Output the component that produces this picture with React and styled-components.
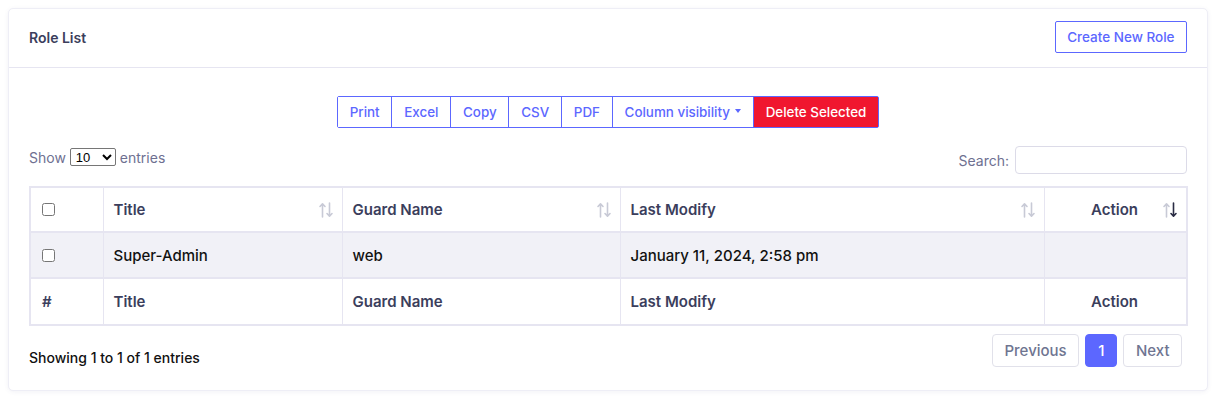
import React from "react";
import styled, { createGlobalStyle } from "styled-components";

const primary = "#5c67ff";
const heading = "#3b3e5c";
const line = "#e6e5f1";

const GlobalStyle = createGlobalStyle`
  html, body {
    margin: 0;
    padding: 0;
    background: #ffffff;
    font-family: Inter, "Liberation Sans", sans-serif;
  }
`;

const Page = styled.div`
  padding: 8px;
  width: 1200px;
`;

const Card = styled.div`
  background: #fff;
  border: 1px solid #eeeef6;
  border-radius: 5px;
  box-shadow: 0 1px 4px rgba(90, 90, 140, 0.08);
`;

const CardHeader = styled.div`
  display: flex;
  align-items: center;
  justify-content: space-between;
  height: 58px;
  padding: 0 20px;
  border-bottom: 1px solid ${line};
`;

const Title = styled.h5`
  margin: -2px 0 0;
  font-size: 14px;
  font-weight: 600;
  color: ${heading};
`;

const OutlineButton = styled.button`
  font-family: inherit;
  height: 32px;
  padding: 0 11.5px;
  font-size: 13.5px;
  font-weight: 500;
  color: ${primary};
  background: #fff;
  border: 1px solid ${primary};
  border-radius: 2px;
  margin-top: -2px;
`;

const CardBody = styled.div`
  padding: 28px 20px 23px;
`;

const Toolbar = styled.div`
  display: flex;
  justify-content: center;
`;

const Group = styled.div`
  display: flex;
  border: 1px solid ${primary};
  border-radius: 2px;
`;

const GroupButton = styled.button`
  font-family: inherit;
  display: flex;
  align-items: center;
  gap: 5px;
  height: 30px;
  padding: 0 11.8px;
  font-size: 13.4px;
  font-weight: 500;
  color: ${(p) => (p.$danger ? "#fff" : primary)};
  background: ${(p) => (p.$danger ? "#f0162f" : "#fff")};
  border: none;
  border-left: ${(p) => (p.$first ? "none" : `1px solid ${primary}`)};
`;

const Caret = styled.span`
  width: 0;
  height: 0;
  border-left: 3.5px solid transparent;
  border-right: 3.5px solid transparent;
  border-top: 4px solid ${primary};
  margin-top: -3px;
`;

const Controls = styled.div`
  display: flex;
  justify-content: space-between;
  align-items: center;
  margin-top: 18px;
  font-size: 14px;
  color: #6e7091;
`;

const Length = styled.label`
  display: flex;
  align-items: center;
  gap: 4px;
  margin-top: -6px;
`;

const Select = styled.select`
  font-family: "Liberation Sans", sans-serif;
  font-size: 13px;
  height: 18px;
  width: 46px;
  padding: 0 1px;
  border: 1px solid #767676;
  border-radius: 2px;
  color: #000;
  background: #fff;
`;

const Search = styled.label`
  display: flex;
  align-items: center;
  gap: 6px;
`;

const SearchInput = styled.input`
  width: 172px;
  height: 28px;
  box-sizing: border-box;
  border: 1px solid #dcdbe8;
  border-radius: 4px;
`;

const Table = styled.table`
  width: 1159px;
  table-layout: fixed;
  margin-top: 12px;
  border-collapse: collapse;
  border: 2px solid ${line};
  font-size: 15px;
`;

const Th = styled.th`
  position: relative;
  box-sizing: border-box;
  height: 45px;
  padding: 0 ${(p) => (p.$right ? 48 : 10)}px 0 ${(p) => (p.$check ? 11 : 10)}px;
  text-align: ${(p) => (p.$right ? "right" : "left")};
  font-weight: 600;
  color: ${heading};
  border: 1px solid ${line};
  border-bottom: 2px solid ${line};
  width: ${(p) => p.$w || "auto"};
`;

const Td = styled.td`
  height: 44px;
  padding: 0 10px 0 ${(p) => (p.$check ? 11 : 10)}px;
  font-weight: 500;
  color: #111;
  border: 1px solid ${line};
  border-bottom: 2px solid ${line};
`;

const StripedRow = styled.tr`
  background: #f1f1f7;
`;

const FootCell = styled.th`
  height: 45px;
  padding: 0 ${(p) => (p.$right ? 48 : 10)}px 0 ${(p) => (p.$check ? 11 : 10)}px;
  text-align: ${(p) => (p.$right ? "right" : "left")};
  font-weight: 600;
  color: ${heading};
  border: 1px solid ${line};
`;

const Check = styled.input`
  width: 13px;
  height: 13px;
  margin: 0;
  display: block;
`;

const SortIcon = styled.svg`
  position: absolute;
  right: 8px;
  top: 50%;
  transform: translateY(-50%);
`;

const Footer = styled.div`
  display: flex;
  justify-content: space-between;
  align-items: flex-start;
  margin-top: 8px;
`;

const Info = styled.div`
  font-size: 14px;
  font-weight: 500;
  color: #111;
  padding-top: 15px;
`;

const Pager = styled.div`
  display: flex;
  gap: 6px;
  margin-right: 5px;
`;

const PageButton = styled.button`
  font-family: inherit;
  height: 33px;
  padding: 0 ${(p) => (p.$active ? 12 : 11.5)}px;
  font-size: 15px;
  font-weight: 500;
  color: ${(p) => (p.$active ? "#fff" : "#6f7591")};
  background: ${(p) => (p.$active ? primary : "#fff")};
  border: 1px solid ${(p) => (p.$active ? primary : "#e1e1ea")};
  border-radius: 4px;
`;

function Sort({ desc }) {
  return (
    <SortIcon width="16" height="16" viewBox="0 0 16 16">
      <g fill="none" strokeWidth="1.6" strokeLinecap="round" strokeLinejoin="round">
        <path d="M4.5 15V2M2 4.5l2.5-2.7L7 4.5" stroke="#c8cad6" />
        <path d="M11.5 1v13M9 11.5l2.5 2.7 2.5-2.7" stroke={desc ? "#2a2c44" : "#c8cad6"} />
      </g>
    </SortIcon>
  );
}

const columns = [
  { label: "Title", w: "239px" },
  { label: "Guard Name", w: "278px" },
  { label: "Last Modify", w: "424px" },
];

export default function App() {
  return (
    <Page>
      <GlobalStyle />
      <Card>
        <CardHeader>
          <Title>Role List</Title>
          <OutlineButton>Create New Role</OutlineButton>
        </CardHeader>
        <CardBody>
          <Toolbar>
            <Group>
              <GroupButton $first>Print</GroupButton>
              <GroupButton>Excel</GroupButton>
              <GroupButton>Copy</GroupButton>
              <GroupButton>CSV</GroupButton>
              <GroupButton>PDF</GroupButton>
              <GroupButton>
                Column visibility <Caret />
              </GroupButton>
              <GroupButton $danger>Delete Selected</GroupButton>
            </Group>
          </Toolbar>

          <Controls>
            <Length>
              Show
              <Select defaultValue="10">
                <option>10</option>
                <option>25</option>
                <option>50</option>
              </Select>
              entries
            </Length>
            <Search>
              Search:
              <SearchInput type="search" />
            </Search>
          </Controls>

          <Table>
            <thead>
              <tr>
                <Th $check $w="73px">
                  <Check type="checkbox" />
                </Th>
                {columns.map((c) => (
                  <Th key={c.label} $w={c.w}>
                    {c.label}
                    <Sort />
                  </Th>
                ))}
                <Th $right>
                  Action
                  <Sort desc />
                </Th>
              </tr>
            </thead>
            <tbody>
              <StripedRow>
                <Td $check>
                  <Check type="checkbox" />
                </Td>
                <Td>Super-Admin</Td>
                <Td>web</Td>
                <Td>January 11, 2024, 2:58 pm</Td>
                <Td />
              </StripedRow>
            </tbody>
            <tfoot>
              <tr>
                <FootCell $check>#</FootCell>
                <FootCell>Title</FootCell>
                <FootCell>Guard Name</FootCell>
                <FootCell>Last Modify</FootCell>
                <FootCell $right>Action</FootCell>
              </tr>
            </tfoot>
          </Table>

          <Footer>
            <Info>Showing 1 to 1 of 1 entries</Info>
            <Pager>
              <PageButton>Previous</PageButton>
              <PageButton $active>1</PageButton>
              <PageButton>Next</PageButton>
            </Pager>
          </Footer>
        </CardBody>
      </Card>
    </Page>
  );
}
